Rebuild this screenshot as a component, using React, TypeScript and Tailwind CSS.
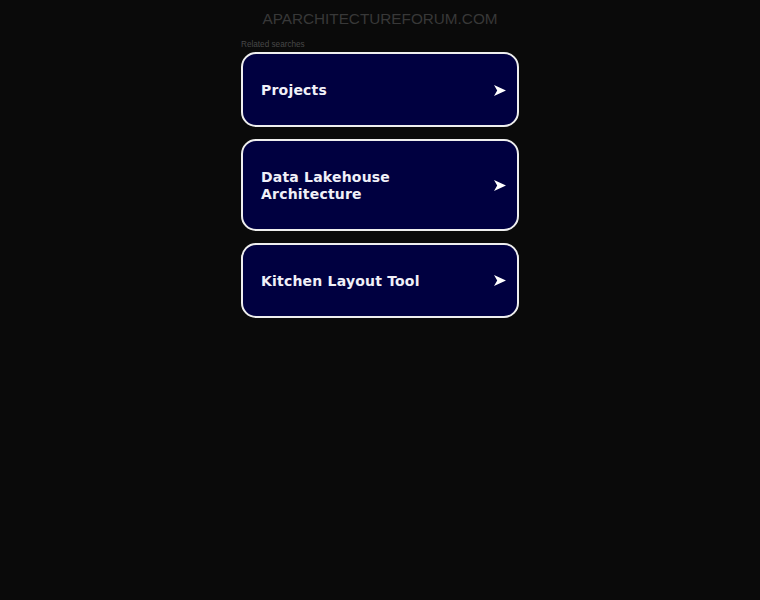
import React from "react";

const items = [["Projects"], ["Data Lakehouse", "Architecture"], ["Kitchen Layout Tool"]];

function Arrow() {
  return (
    <svg width="12" height="11" viewBox="0 0 12 11" className="shrink-0">
      <polygon points="0,0 12,5.5 0,11 3.2,5.5" fill="#ffffff" />
    </svg>
  );
}

export default function App() {
  return (
    <div className="min-h-[600px] w-full bg-[#0a0a0a]">
      <div className="mx-auto w-[278px]">
        <div className="pt-[9px] text-center text-[15.3px] leading-[20px] text-[#383838] uppercase [font-family:'Liberation_Sans',Arial,sans-serif] whitespace-nowrap -mx-10">
          aparchitectureforum.com
        </div>
        <div className="mt-[11px] text-[8.2px] leading-[10px] text-[#484848] [font-family:'Liberation_Sans',Arial,sans-serif]">
          Related searches
        </div>
        <div className="mt-[2px] flex flex-col gap-[12px]">
          {items.map((lines, i) => (
            <div
              key={i}
              className="flex items-center justify-between rounded-[15px] border-2 border-[#eeeeee] bg-[#000040] pt-[28px] pb-[26.5px] pl-[18px] pr-[11px]"
            >
              <div className="text-[14px] font-bold leading-[16.5px] tracking-[0.2px] text-[#f0f0f8] [font-family:'DejaVu_Sans',sans-serif]">
                {lines.map((l) => (
                  <div key={l}>{l}</div>
                ))}
              </div>
              <Arrow />
            </div>
          ))}
        </div>
      </div>
    </div>
  );
}
